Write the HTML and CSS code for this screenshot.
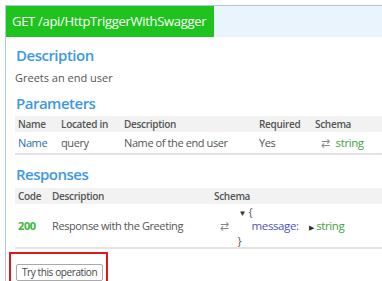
FILE: index.html
```html
<!DOCTYPE html>
<html lang="en">
<head>
    <meta charset="UTF-8">
    <title>HttpTriggerWithSwagger</title>
    <link rel="stylesheet" href="styles.css">
</head>
<body>
    <div class="operation">
        <div class="op-header">
            <span class="op-method">GET /api/HttpTriggerWithSwagger</span>
        </div>
        <div class="op-body">
            <h3 class="section-title">Description</h3>
            <p class="summary">Greets an end user</p>

            <h3 class="section-title">Parameters</h3>
            <table class="grid params">
                <thead>
                    <tr>
                        <th class="c-name">Name</th>
                        <th class="c-loc">Located in</th>
                        <th class="c-desc">Description</th>
                        <th class="c-req">Required</th>
                        <th>Schema</th>
                    </tr>
                </thead>
                <tbody>
                    <tr>
                        <td><a href="#" class="param-name">Name</a></td>
                        <td>query</td>
                        <td>Name of the end user</td>
                        <td>Yes</td>
                        <td><span class="swap">&#8644;</span><span class="type">string</span></td>
                    </tr>
                </tbody>
            </table>

            <h3 class="section-title responses-title">Responses</h3>
            <table class="grid responses">
                <thead>
                    <tr>
                        <th class="c-code">Code</th>
                        <th class="c-rdesc">Description</th>
                        <th>Schema</th>
                    </tr>
                </thead>
                <tbody>
                    <tr>
                        <td class="code">200</td>
                        <td>Response with the Greeting</td>
                        <td>
                            <div class="schema">
                                <span class="swap">&#8644;</span>
                                <div class="model">
                                    <div class="model-open"><span class="caret">&#9660;</span> {</div>
                                    <div class="model-prop"><span class="prop">message:</span><span class="caret-r">&#9654;</span><span class="type">string</span></div>
                                    <div class="model-close">}</div>
                                </div>
                            </div>
                        </td>
                    </tr>
                </tbody>
            </table>

            <div class="try-wrap">
                <button class="try-btn">Try this operation</button>
            </div>
        </div>
    </div>
</body>
</html>
```

FILE: styles.css
```css
body {
    margin: 0;
    background: #fff;
    font-family: "Open Sans", "Noto Sans", sans-serif;
    overflow: hidden;
    height: 281px;
}

.operation {
    margin: 5px 0 0 5px;
    border-left: 1px solid #a9c9e4;
    border-top: 1px solid #a9c9e4;
    height: 275px;
}

.op-header {
    display: flex;
    background: #e9f4fd;
    height: 31px;
}

.op-method {
    background: #1ec31e;
    color: #fff;
    font-size: 13px;
    letter-spacing: -0.3px;
    line-height: 31px;
    padding: 0 6px;
    width: 196px;
    white-space: nowrap;
}

.op-body {
    padding-left: 9px;
}

.section-title {
    margin: 7px 0 0 1px;
    font-size: 15px;
    letter-spacing: -0.5px;
    line-height: 20px;
    font-weight: 600;
    color: #3d98e3;
}

.op-body > .section-title:first-child {
    margin-top: 8px;
}

.section-title.responses-title {
    margin-top: 9px;
}

.summary {
    margin: 5px 0 0;
    font-size: 11px;
    line-height: 16px;
    color: #555;
}

.grid {
    border-collapse: collapse;
    width: 100%;
    margin-top: 3px;
    font-size: 11px;
    letter-spacing: -0.4px;
    color: #555;
}

.grid th {
    background: #f2f2f2;
    text-align: left;
    font-weight: 600;
    color: #555;
    font-size: 10px;
    letter-spacing: -0.3px;
    height: 16px;
    padding: 0 3px;
}

.grid td {
    padding: 0 3px;
    border-bottom: 2px solid #e4e4e4;
    white-space: nowrap;
}

.params td {
    height: 21px;
}

.c-name { width: 37px; }
.c-loc { width: 57px; }
.c-desc { width: 129px; }
.c-req { width: 50px; }

.c-code { width: 28px; }
.c-rdesc { width: 156px; }

.param-name {
    color: #2d6db3;
    text-decoration: none;
}

.swap {
    color: #888;
    font-size: 11px;
    margin: 0 6px;
}

.type {
    color: #3fa33f;
    font-size: 11.5px;
}

.code {
    color: #3ab53a;
    font-weight: 700;
}

.grid.responses {
    margin-top: 4px;
}

.responses td {
    height: 43px;
}

.schema {
    display: flex;
    align-items: center;
    gap: 3px;
}

.model {
    line-height: 13px;
}

.model-open {
    padding-left: 1px;
}

.model-prop {
    padding-left: 14px;
}

.caret {
    font-size: 8px;
    color: #333;
}

.caret-r {
    font-size: 7px;
    color: #333;
    margin: 0 3px 0 10px;
}

.prop {
    color: #5050c8;
    font-size: 11.5px;
}

.try-wrap {
    display: inline-block;
    margin: 3px 0 0 -6px;
    padding: 5px 3px 4px 5px;
    border: 2px solid #e01818;
}

.try-btn {
    font-family: "Open Sans", "Noto Sans", sans-serif;
    font-size: 10px;
    letter-spacing: -0.4px;
    color: #444;
    background: #fff;
    border: 1px solid #aaa;
    border-radius: 2px;
    padding: 1px 5px;
    line-height: 13px;
}
```
